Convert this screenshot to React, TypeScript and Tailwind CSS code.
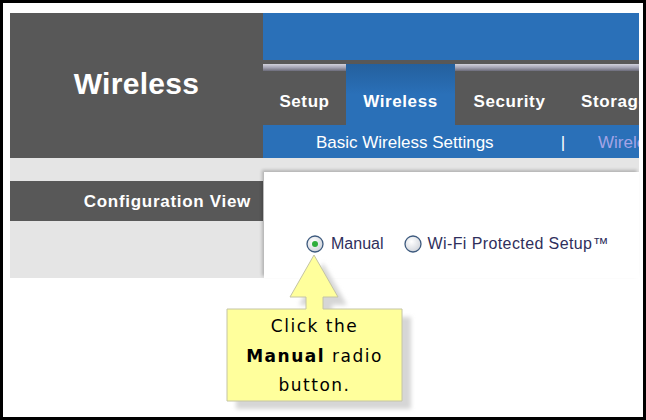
import React from "react";

const Radio = ({ checked }: { checked?: boolean }) => (
  <svg width="18" height="18" viewBox="0 0 18 18" className="shrink-0">
    <defs>
      <radialGradient id={checked ? "rg1" : "rg2"} cx="0.4" cy="0.35" r="0.7">
        <stop offset="0" stopColor="#ffffff" />
        <stop offset="1" stopColor="#cfd3da" />
      </radialGradient>
    </defs>
    <circle cx="9" cy="9" r="8" fill={`url(#${checked ? "rg1" : "rg2"})`} stroke="#3d5a7e" strokeWidth="1.3" />
    {checked && <circle cx="9" cy="9" r="3" fill="#2fae3c" />}
  </svg>
);

const tabs = [
  { label: "Setup", w: "w-[83px]", align: "justify-center" },
  { label: "Wireless", w: "w-[109px]", align: "justify-center", active: true },
  { label: "Security", w: "w-[109px]", align: "justify-center" },
  { label: "Storage", w: "w-[90px]", align: "justify-start pl-[17px]" },
];

const Callout = () => (
  <div className="absolute left-[221px] top-[247px] w-[200px] h-[165px]">
    <svg width="200" height="165" className="absolute left-0 top-0">
      <defs>
        <filter id="blur" x="-10%" y="-10%" width="130%" height="130%">
          <feGaussianBlur stdDeviation="2" />
        </filter>
      </defs>
      <polygon
        transform="translate(9 8)"
        points="3,59 82,59 82,47 66,47 90,5 114,47 99,47 99,59 178,59 178,151 3,151"
        fill="#d6d6d6"
        filter="url(#blur)"
      />
      <polygon
        points="3,59 82,59 82,47 66,47 90,5 114,47 99,47 99,59 178,59 178,151 3,151"
        fill="#ffff9c"
        stroke="#c4c4a4"
        strokeWidth="1"
      />
    </svg>
    <div
      className="absolute left-[3px] top-[62px] w-[175px] text-center text-[17px] leading-[29.5px] tracking-[1.5px] text-black"
      style={{ fontFamily: '"DejaVu Sans", Verdana, sans-serif' }}
    >
      Click the
      <br />
      <span className="font-bold">Manual</span> radio
      <br />
      button.
    </div>
  </div>
);

export default function App() {
  return (
    <div
      className="relative w-[646px] h-[420px] bg-white border-[3px] border-black pl-[7px] pt-[10px] pr-[4px] overflow-hidden"
      style={{ fontFamily: '"Liberation Sans", Arial, sans-serif' }}
    >
      {/* header */}
      <div className="flex h-[145px]">
        <div className="w-[253px] bg-[#585858] flex items-center justify-center pb-[4px]">
          <span className="text-white font-bold text-[30px] tracking-[0.3px]">Wireless</span>
        </div>
        <div className="flex-1 flex flex-col overflow-hidden">
          <div className="h-[47px] bg-[#2a70b8]" />
          <div className="h-[65px] bg-[#585858] flex pt-[4px]">
            {tabs.map((t) => (
              <div
                key={t.label}
                className={`${t.w} shrink-0 flex flex-col ${
                  t.active ? "bg-gradient-to-b from-[#24609e] via-[#2a70b8] to-[#2a70b8]" : ""
                }`}
              >
                <div
                  className={`h-[7px] ${
                    t.active ? "" : "bg-gradient-to-b from-[#d2d2dc] via-[#a4a4b4] to-[#6c6c7a]"
                  }`}
                />
                <div className={`flex-1 flex items-center ${t.align} pt-[8px] whitespace-nowrap`}>
                  <span className="text-white font-bold text-[17px] tracking-[0.6px]">{t.label}</span>
                </div>
              </div>
            ))}
          </div>
          <div className="h-[33px] bg-[#2a70b8] flex items-center whitespace-nowrap text-[17px] pt-[3px]">
            <span className="ml-[53px] text-white">Basic Wireless Settings</span>
            <span className="ml-[67px] text-white">|</span>
            <span className="ml-[33px] text-[#a4a4e6]">Wireless Security</span>
          </div>
        </div>
      </div>

      {/* body */}
      <div className="flex h-[120px]">
        <div className="w-[253px] flex flex-col">
          <div className="h-[23px] bg-[#e5e5e5]" />
          <div className="h-[40px] bg-[#585858] flex items-center justify-end pr-[12px] pt-[2px]">
            <span className="text-white font-bold text-[17px] tracking-[0.7px]">Configuration View</span>
          </div>
          <div className="flex-1 bg-[#e5e5e5]" />
        </div>
        <div className="flex-1 flex flex-col bg-[#e5e5e5]">
          <div className="h-[14px]" />
          <div className="flex-1 bg-white ml-[1px] shadow-[-2px_-2px_3px_rgba(0,0,0,0.22)]">
            <div className="flex items-center pl-[42px] pt-[60px] text-[16px] text-[#2f2f5c] whitespace-nowrap">
              <Radio checked />
              <span className="ml-[7px]">Manual</span>
              <span className="ml-[21px]">
                <Radio />
              </span>
              <span className="ml-[5px] tracking-[0.4px]">Wi-Fi Protected Setup™</span>
            </div>
          </div>
        </div>
      </div>

      <Callout />
    </div>
  );
}
